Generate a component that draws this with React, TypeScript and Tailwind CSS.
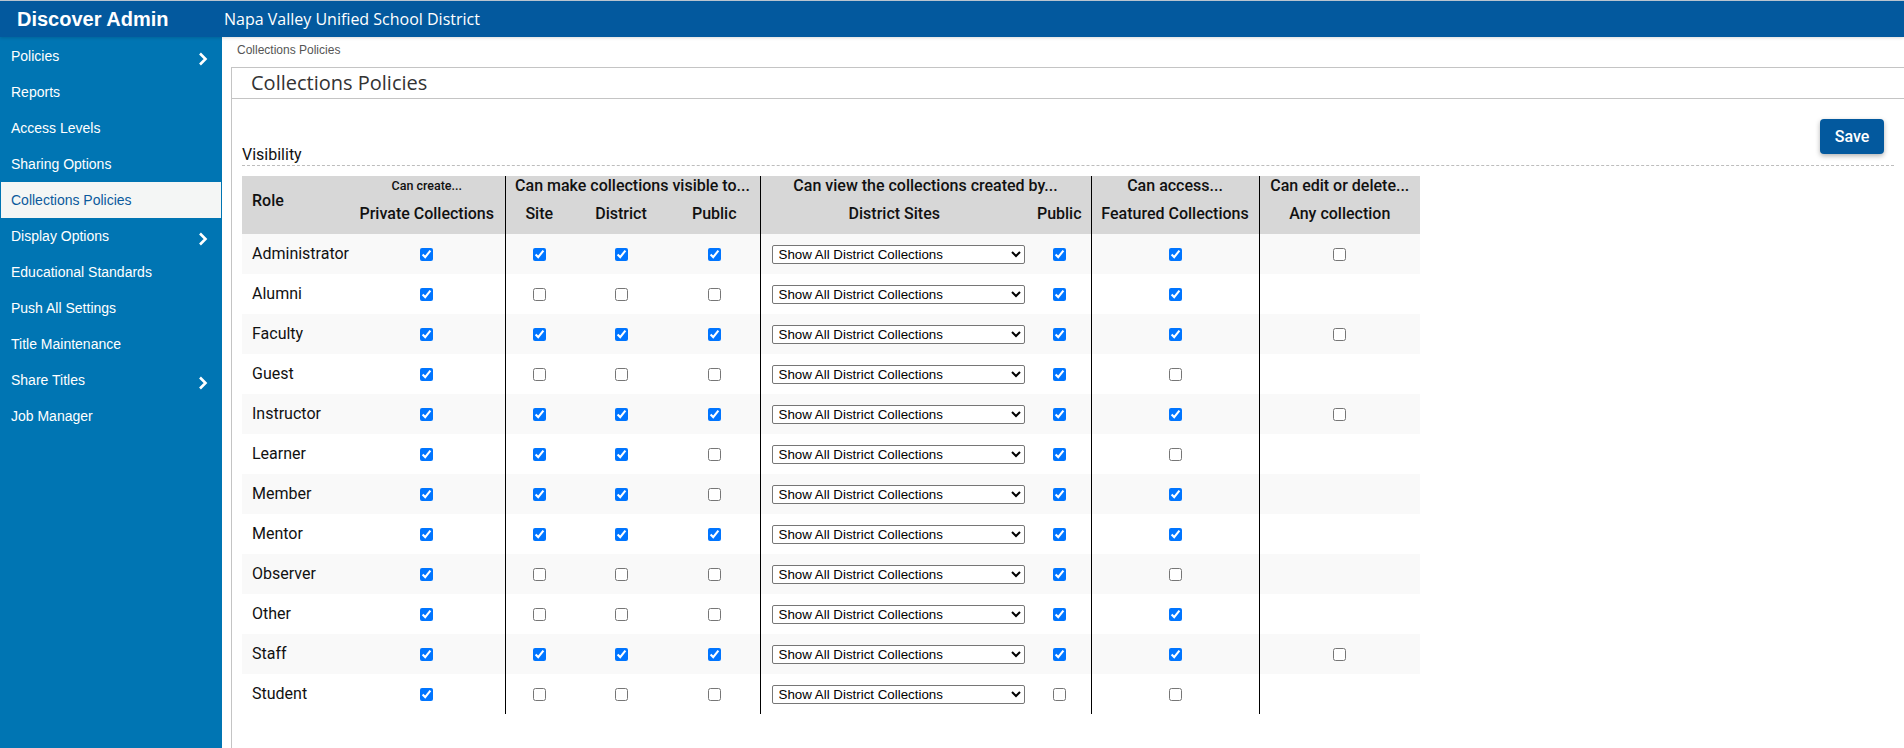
import React from 'react';

// [role, create, site, district, public, viewPublic, featured, edit (null = no box)]
type RoleRow = [string, boolean, boolean, boolean, boolean, boolean, boolean, boolean | null];

const rows: RoleRow[] = [
  ['Administrator', true, true, true, true, true, true, false],
  ['Alumni', true, false, false, false, true, true, null],
  ['Faculty', true, true, true, true, true, true, false],
  ['Guest', true, false, false, false, true, false, null],
  ['Instructor', true, true, true, true, true, true, false],
  ['Learner', true, true, true, false, true, false, null],
  ['Member', true, true, true, false, true, true, null],
  ['Mentor', true, true, true, true, true, true, null],
  ['Observer', true, false, false, false, true, false, null],
  ['Other', true, false, false, false, true, true, null],
  ['Staff', true, true, true, true, true, true, false],
  ['Student', true, false, false, false, false, false, null],
];

const navItems = [
  { label: 'Policies', sub: true },
  { label: 'Reports' },
  { label: 'Access Levels' },
  { label: 'Sharing Options' },
  { label: 'Collections Policies', active: true },
  { label: 'Display Options', sub: true },
  { label: 'Educational Standards' },
  { label: 'Push All Settings' },
  { label: 'Title Maintenance' },
  { label: 'Share Titles', sub: true },
  { label: 'Job Manager' },
];

const Chevron = () => (
  <svg width="10" height="14" viewBox="0 0 10 14" className="mt-[6px]">
    <polyline points="2,1.5 7.5,7 2,12.5" fill="none" stroke="white" strokeWidth="2.6" />
  </svg>
);

const Box = ({ on }: { on: boolean }) => (
  <input type="checkbox" defaultChecked={on} className="align-middle" />
);

export default function App() {
  return (
    <div className="flex min-h-screen flex-col bg-white">
      {/* top bar */}
      <div className="relative z-10 flex h-[37px] items-center border-t border-[#b9c4cf] bg-[#03599e] shadow-[0_1px_3px_rgba(0,0,0,0.15)]">
        <div className="w-[222px] pl-[17px] font-['Liberation_Sans',Arial,sans-serif] text-[20px] font-bold text-white">
          Discover Admin
        </div>
        <div className="pl-[2px] font-['Open_Sans',sans-serif] text-[16px] text-white">
          Napa Valley Unified School District
        </div>
      </div>

      <div className="flex flex-1">
        {/* sidebar */}
        <nav className="w-[222px] shrink-0 bg-[#0075b3] pt-[1px] font-['Liberation_Sans',Arial,sans-serif] text-[14px]">
          {navItems.map((item) => (
            <div
              key={item.label}
              className={`mx-[1px] flex h-[36px] items-center justify-between pl-[10px] pr-[13px] ${
                item.active ? 'bg-[#f4f6f5] text-[#0b5a9c]' : 'text-white'
              }`}
            >
              <span>{item.label}</span>
              {item.sub && <Chevron />}
            </div>
          ))}
        </nav>

        {/* main */}
        <main className="flex min-w-0 flex-1 flex-col">
          <div className="h-[30px] pl-[15px] pt-[6px] font-['Liberation_Sans',Arial,sans-serif] text-[12px] leading-[14px] text-[#555]">
            Collections Policies
          </div>

          <div className="ml-[9px] flex flex-1 flex-col border-l border-t border-[#c4c4c4]">
            <div className="flex h-[31px] items-center border-b border-[#c4c4c4] pl-[19px] font-['Open_Sans',sans-serif] text-[20px] text-[#333]">
              Collections Policies
            </div>

            <div className="px-[10px] pt-[20px] font-['Roboto',sans-serif] text-[#111]">
              <div className="flex items-end justify-between border-b border-dashed border-[#bdbdbd]">
                <div className="pb-[1px] text-[16px] leading-[19px]">Visibility</div>
                <button className="mb-[11px] mr-[10px] h-[35px] w-[64px] rounded-[4px] bg-[#03599e] text-[16px] font-medium text-white shadow-[0_2px_5px_rgba(0,0,0,0.3)]">
                  Save
                </button>
              </div>

              <table className="mt-[10px] w-[1178px] table-fixed border-collapse">
                <colgroup>
                  <col className="w-[107px]" />
                  <col className="w-[156px]" />
                  <col className="w-[68px]" />
                  <col className="w-[96px]" />
                  <col className="w-[91px]" />
                  <col className="w-[268px]" />
                  <col className="w-[63px]" />
                  <col className="w-[168px]" />
                  <col className="w-[161px]" />
                </colgroup>
                <thead className="bg-[#d7d7d7] text-[16px] font-medium leading-[20px]">
                  <tr className="h-[20px]">
                    <th rowSpan={2} className="pb-[8px] pl-[10px] text-left font-medium">
                      Role
                    </th>
                    <th className="border-r border-black text-[12.5px] font-medium">Can create...</th>
                    <th colSpan={3} className="border-r border-black font-medium">
                      Can make collections visible to...
                    </th>
                    <th colSpan={2} className="border-r border-black font-medium">
                      Can view the collections created by...
                    </th>
                    <th className="border-r border-black font-medium">Can access...</th>
                    <th className="font-medium">Can edit or delete...</th>
                  </tr>
                  <tr className="h-[38px]">
                    <th className="border-r border-black pb-[2px] font-medium">Private Collections</th>
                    <th className="pb-[2px] font-medium">Site</th>
                    <th className="pb-[2px] font-medium">District</th>
                    <th className="border-r border-black pb-[2px] font-medium">Public</th>
                    <th className="pb-[2px] font-medium">District Sites</th>
                    <th className="border-r border-black pb-[2px] font-medium">Public</th>
                    <th className="border-r border-black pb-[2px] font-medium">Featured Collections</th>
                    <th className="pb-[2px] font-medium">Any collection</th>
                  </tr>
                </thead>
                <tbody className="text-[16px]">
                  {rows.map(([role, create, site, district, pub, viewPublic, featured, edit], i) => (
                    <tr key={role} className={`h-[40px] ${i % 2 === 0 ? 'bg-[#f9f9f9]' : 'bg-white'}`}>
                      <td className="pl-[10px]">{role}</td>
                      <td className="border-r border-black text-center">
                        <Box on={create} />
                      </td>
                      <td className="text-center">
                        <Box on={site} />
                      </td>
                      <td className="text-center">
                        <Box on={district} />
                      </td>
                      <td className="border-r border-black text-center">
                        <Box on={pub} />
                      </td>
                      <td className="pl-[11px]">
                        <select className="h-[19px] w-[253px] rounded-[2px] border border-[#767676] bg-white pl-[2px] align-middle font-['Liberation_Sans',Arial,sans-serif] text-[13.33px] text-black">
                          <option>Show All District Collections</option>
                        </select>
                      </td>
                      <td className="border-r border-black text-center">
                        <Box on={viewPublic} />
                      </td>
                      <td className="border-r border-black text-center">
                        <Box on={featured} />
                      </td>
                      <td className="text-center">{edit !== null && <Box on={edit} />}</td>
                    </tr>
                  ))}
                </tbody>
              </table>
            </div>
          </div>
        </main>
      </div>
    </div>
  );
}
